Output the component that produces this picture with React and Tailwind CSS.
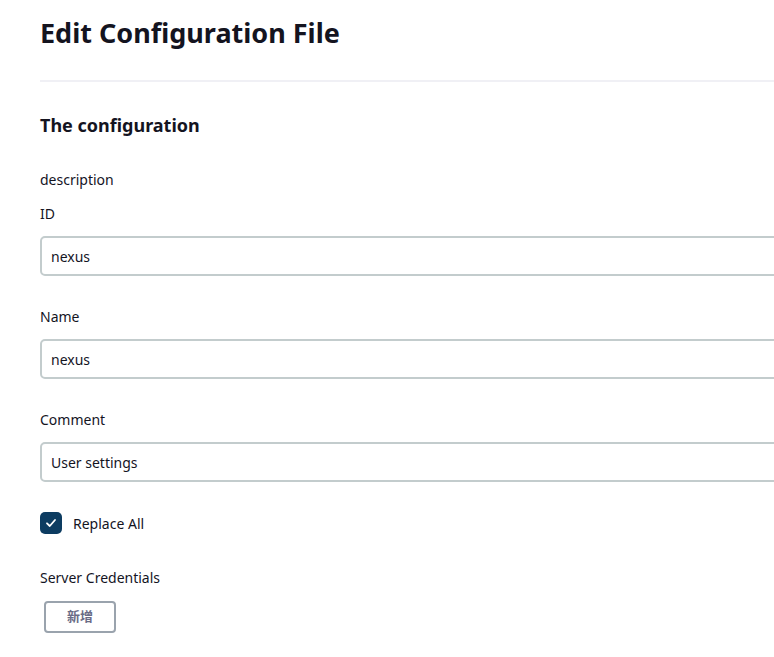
import React from 'react';

const Field = ({ label, value }) => (
  <div className="flex flex-col">
    <label className="text-[14px] text-[#14141f] leading-[20px] mb-[12px]">{label}</label>
    <div className="h-[40px] w-[760px] rounded-[5px] border-2 border-[#c3cccd] flex items-center pl-[9px] text-[14px] text-[#14141f]">
      {value}
    </div>
  </div>
);

const App = () => {
  return (
    <div className="min-h-screen w-full overflow-hidden bg-white pl-[40px] pt-[14px] font-['Noto_Sans','Noto_Sans_CJK_SC',sans-serif] text-[#14141f]">
      <h1 className="text-[27px] font-bold leading-[38px] pb-[28px]">Edit Configuration File</h1>
      <div className="h-[2px] w-[760px] bg-[#f0f0f5]" />

      <h2 className="mt-[30px] text-[18px] font-bold leading-[26px]">The configuration</h2>

      <div className="mt-[32px] text-[14px] leading-[20px]">description</div>

      <div className="mt-[14px] flex flex-col gap-[31px]">
        <Field label="ID" value="nexus" />
        <Field label="Name" value="nexus" />
        <Field label="Comment" value="User settings" />
      </div>

      <label className="mt-[30px] flex items-center gap-[11px]">
        <span className="w-[22px] h-[22px] rounded-[5px] bg-[#0d3c61] flex items-center justify-center">
          <svg width="12" height="12" viewBox="0 0 12 12" fill="none">
            <path d="M2 6.3 L4.8 9 L10 3" stroke="white" strokeWidth="1.8" strokeLinecap="round" strokeLinejoin="round" />
          </svg>
        </span>
        <span className="text-[14px]">Replace All</span>
      </label>

      <div className="mt-[34px] text-[14px] leading-[20px]">Server Credentials</div>
      <button className="mt-[13px] ml-[4px] h-[32px] w-[72px] rounded-[4px] border-2 border-[#9aa3ad] text-[13px] font-bold text-[#6a6b86] flex items-center justify-center">
        新增
      </button>
    </div>
  );
};

export default App;
